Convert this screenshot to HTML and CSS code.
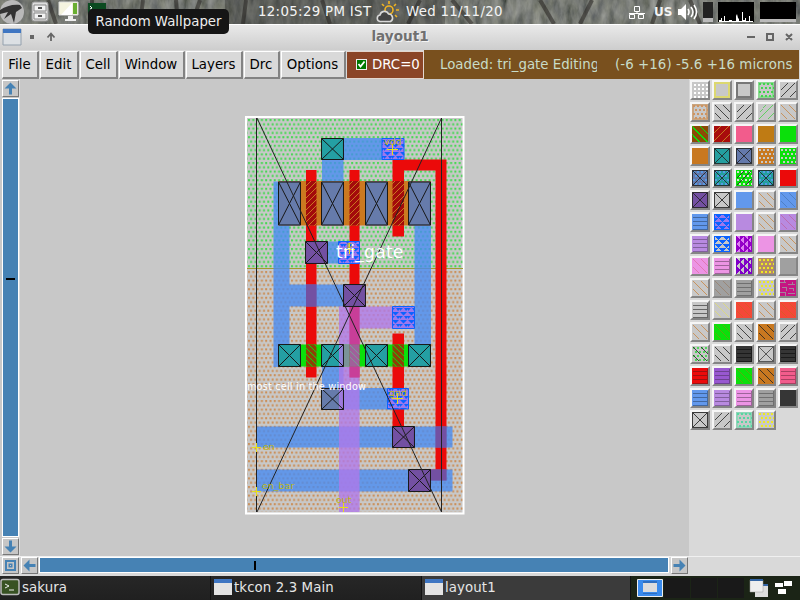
FILE: index.html
```html
<!DOCTYPE html>
<html lang="en">
<head>
<meta charset="utf-8">
<title>layout1</title>
<link rel="stylesheet" href="styles.css">
</head>
<body>
<header class="panel">
  <svg class="bark" width="800" height="24" aria-hidden="true">
    <filter id="noise" x="0" y="0" width="1" height="1"><feTurbulence type="fractalNoise" baseFrequency=".12 .05" numOctaves="4" seed="8"/><feColorMatrix values=".25 .2 0 0 -.04 .25 .2 0 0 -.03 .22 .18 .05 0 -.05 0 0 0 0 1"/></filter>
    <rect width="800" height="24" filter="url(#noise)"/>
    <path d="M48 0l8 24M92 0v24M143 0l-3 24M176 0l2 24M200 0l-8 24M246 0l-3 24M322 0l8 24M420 0l-12 24M452 0l20 24M540 0l14 24M592 0l-12 24M660 0l-8 24M690 0l10 24" stroke="#201c19" stroke-width="4" opacity=".5"/>
    <path d="M225 0h220v24H225z" fill="#222" opacity=".3"/>
  </svg>
  <svg class="tray-left" width="110" height="24">
    <circle cx="12" cy="12" r="12" fill="#b9b9b9"/><path d="M0 10C6 6 13 4 20 5L22 8 16 12 14 23 11 14 4 19 8 12 0 14Z" fill="#333"/>
    <rect x="32" y="2" width="16" height="19" rx="2" fill="#ddd" stroke="#999"/><path d="M34 5h12v6H34zM34 13h12v6H34z" fill="#f3f3f3" stroke="#888"/><path d="M38 8h4M38 16h4" stroke="#555" stroke-width="2"/>
    <path d="M59 2h19v13H59z" fill="#f5f4df" stroke="#ddd"/><path d="M73 3h4v11h-4z" fill="#69ae31"/><path d="M61 15L72 3v12z" fill="#fff"/><path d="M68 16h5v3h3v2H65v-2h3z" fill="#eee"/>
    <rect x="88" y="3" width="18" height="18" fill="#0b4a20"/><path d="M90 6l2 2-2 1" stroke="#fff" fill="none"/>
  </svg>
  <span class="clock">12:05:29 PM IST</span>
  <svg class="weather" width="26" height="24" fill="none">
    <circle cx="14" cy="10" r="4" stroke="#f0b323" stroke-width="1.6"/><path d="M14 1v3M7 4l2 2M21 4l-2 2M21 10h3M20 15l2 2" stroke="#f0b323" stroke-width="1.6"/>
    <path d="M5 21.500a3.300 3.300 0 010-6.500 4.500 4.500 0 018.500-1 4 4 0 012 7.500z" fill="#444" stroke="#d8d8d8" stroke-width="1.600"/>
  </svg>
  <span class="date">Wed 11/11/20</span>
  <svg class="net" width="16" height="14" fill="none" stroke="#fff"><path d="M5.500.5h5v5h-5zM.5 8.500h5v4h-5zM9.500 8.500h5v4h-5zM8 6v1M0 7.500h16"/></svg>
  <span class="lang">US</span>
  <svg class="vol" width="21" height="18" fill="none" stroke="#fff" stroke-width="1.600"><path d="M1 6h3l5-5v16l-5-5H1z" fill="#fff" stroke="none"/><path d="M11 6q2 3 0 6M14 4q4 5 0 10M17 2q5 7 0 14"/></svg>
  <svg class="graphs" width="94" height="20"><path d="M0 0h10v20H0z" fill="#222"/><path d="M0 16h10v4H0z" fill="#bbb"/><path d="M15 0h36v20H15zM57 0h36v20H57z" fill="#000"/><path d="M57 17h36v3H57z" fill="#bbb"/><path d="M16 20v-2h2v-2h1v3h2v-5h1v5h4v-1h3v1h4v-5l1-2 1 4 1 1v2h3v-9h1v8h2v-2h1v3h3v-5h1v5h3v1z" fill="#fff"/></svg>
</header>
<div class="tooltip">Random Wallpaper</div>

<div class="titlebar">
  <svg width="60" height="25"><path d="M3 4h18v16H3z" fill="#dce0e4" stroke="#93a0ad"/><path d="M3 4h18v4H3z" fill="#3f76c2"/><path d="M30 10h4v4h-4z" fill="#666"/><path d="M51 16V9M47.500 12.500l3.500-4 3.500 4" fill="none" stroke="#666" stroke-width="1.800"/></svg>
  <h1>layout1</h1>
  <svg class="winctl" width="60" height="25" fill="none" stroke="#666" stroke-width="2"><path d="M7 13h8M27 10h6v6h-6zM46 10l6 6M52 10l-6 6"/></svg>
</div>

<nav class="menubar">
  <button class="w-file">File</button><button class="w-edit">Edit</button><button class="w-cell">Cell</button><button class="w-window">Window</button><button class="w-layers">Layers</button><button class="w-drc">Drc</button><button class="w-options">Options</button>
  <span class="drc"><svg width="11" height="11"><path d="M0 0h11v11H0z" fill="#eee"/><path d="M1 1h9v9H1z" fill="#070"/><path d="M2.500 5l2 2.500 4-5" fill="none" stroke="#fff" stroke-width="1.800"/></svg>DRC=0</span>
  <span class="status"><span class="loaded">Loaded: tri_gate Editing</span><span class="coords">(-6 +16) -5.6 +16 microns</span></span>
</nav>

<main class="work">
  <div class="vscroll">
    <svg class="arrow" width="17" height="17"><path d="M7.500 1.500l6 6h-4.500v6h-3v-6H1.500z"/></svg>
    <div class="track"><i></i></div>
    <svg class="arrow" width="17" height="17"><path d="M7.500 13.500l6-6h-4.500v-6h-3v6H1.500z"/></svg>
  </div>
  <svg class="canvas" width="669" height="477" viewBox="20 79 669 477">
    <defs>
      <pattern id="well" width="8.600" height="8.600" x="247" y="118" patternUnits="userSpaceOnUse"><path d="M1 1h2v2H1zM5.300 1h2v2h-2zM3.100 5.300h2v2h-2zM7.400 5.300h1.200v2H7.400zM0 5.300h.8v2H0z" fill="#45d852"/></pattern>
      <pattern id="sub" width="8.600" height="8.600" x="247" y="270" patternUnits="userSpaceOnUse"><path d="M1 1h2v2H1zM5.300 1h2v2h-2zM3.100 5.300h2v2h-2zM7.400 5.300h1.200v2H7.400zM0 5.300h.8v2H0z" fill="#cb8f58"/></pattern>
      <pattern id="pg" width="6" height="6" patternUnits="userSpaceOnUse"><path d="M0 0h6v6H0z" fill="#a30b0b"/><path d="M-1 7L7-1M-1 1l2-2M5 7l2-2" stroke="#cb781f" stroke-width="1"/></pattern>
      <pattern id="ng" width="6" height="6" patternUnits="userSpaceOnUse"><path d="M0 0h6v6H0z" fill="#8a4405"/><path d="M-1-1l8 8M5-1l2 2M-1 5l2 2" stroke="#0ad80a" stroke-width="1"/></pattern>
      <pattern id="via" width="8" height="8" patternUnits="userSpaceOnUse"><path d="M0 0h8v8H0z" fill="#9b78ed"/><path d="M0 0h7L3.500 3.500zM4 4h4v1L6 7zM0 4h3L0 7z" fill="#0b62ff"/></pattern>
      <symbol id="cut" viewBox="0 0 22 22" preserveAspectRatio="none"><path d="M.5.5h21v21H.5zM.5.5l21 21M21.500.5l-21 21" fill="none" stroke="#181818" vector-effect="non-scaling-stroke"/></symbol>
    </defs>
    <rect x="246" y="117" width="217.500" height="396.500" fill="#c8c8c8" stroke="#fff" stroke-width="2"/>
    <path d="M247.500 118h215v150h-215z" fill="url(#well)"/>
    <path d="M247.500 269h215v243h-215z" fill="url(#sub)"/>
    <path d="M247 268.500h216" stroke="#a39b2e"/>
    <g fill="#eb0a0a">
      <path d="M306 170h10.500v207.500H306zM349.500 170h10v207.500h-10zM392.500 159.500h54v321h-16v-11h5V170.500h-31.500v66h-11.500zM392.500 333.500H404V432h-11.500z"/>
    </g>
    <path fill="#cb7920" d="M278 181h153v44.500H278z"/>
    <path fill="#0be00b" d="M278 344.500h153v22H278z"/>
    <path fill="url(#pg)" d="M306 181h10.500v44.500H306zM349.500 181h10v44.500h-10zM392.500 181H404v44.500h-11.500z"/>
    <path fill="url(#ng)" d="M306 344.500h10.500v22H306zM349.500 344.500h10v22h-10zM392.500 344.500H404v22h-11.500z"/>
    <path fill="#468af2" fill-opacity=".78" d="M322 138h60v22h-38.500v21H322zM273.500 181.500H278v44h11.500v59H344v22h-54.500v38.500H278v22h-4.500zM414.500 225.500H431v119h-16.500zM328 241.500h10v22h-10zM322 366.500h21.500V388H388v21.500h-66zM256.500 426.500h196v21h-196zM256.500 469.500h196v22h-196z"/>
    <g fill="#7350a2"><path d="M306 284.500h10.500v22H306zM435.500 426.500h11v21h-11zM430.500 469.500h16v11h-16z"/></g>
    <g fill="#667bab"><path d="M278.500 181.500h22v44h-22zM322 181.500h22v44h-22zM365.500 181.500h22v44h-22zM408.500 181.500h22v44h-22zM322 388h22v21.500h-22z"/></g>
    <g fill="#249fa3"><path d="M322 138h22v22h-22zM278.500 344.500h22v22h-22zM322 344.500h22v22h-22zM365.500 344.500h22v22h-22zM408.500 344.500h22v22h-22z"/></g>
    <path fill="#b078ea" fill-opacity=".78" d="M339 306.500h53v22h-32.500V344.500H339zM339 344.500h5v22h-5zM339 366.500h20.500V512H339z"/>
    <path fill="#c83e98" d="M349.500 306.500h10v38h-10zM349.500 366.500h10v11h-10z"/>
    <path fill="#7b9398" d="M344 344.500h5.500v22H344z"/>
    <path fill="#a0609a" d="M349.500 344.500h10v22h-10z"/><path d="M350 345l9.500 9.500M350 351l9.500 9.500M350 357l9.500 9.500" stroke="#7b9a98"/>
    <g fill="#7350a2"><path d="M305.500 241.500h22v22h-22zM343.500 284.500h22v22h-22zM392.500 426.500h22v21h-22zM408.500 469.500h22v22h-22z"/></g>
    <g fill="url(#via)" stroke="#0b62ff"><path d="M382 138.500h22v21h-22zM338.500 241.500h21v22h-21zM392.500 306.500h22v22h-22zM387.500 388.500h21v20.500h-21z"/></g>
    <use href="#cut" x="278" y="181" width="23" height="45"/><use href="#cut" x="321" y="181" width="23" height="45"/><use href="#cut" x="365" y="181" width="23" height="45"/><use href="#cut" x="408" y="181" width="23" height="45"/>
    <use href="#cut" x="321" y="138" width="23" height="22"/><use href="#cut" x="305" y="241" width="23" height="23"/><use href="#cut" x="343" y="284" width="23" height="23"/>
    <use href="#cut" x="278" y="344" width="23" height="23"/><use href="#cut" x="321" y="344" width="23" height="23"/><use href="#cut" x="365" y="344" width="23" height="23"/><use href="#cut" x="408" y="344" width="23" height="23"/>
    <use href="#cut" x="321" y="388" width="23" height="22"/><use href="#cut" x="392" y="426" width="23" height="22"/><use href="#cut" x="408" y="469" width="23" height="23"/>
    <path d="M256.500 118v394M441.500 118v394M257 118l184.500 394M441.500 118L257 512" fill="none" stroke="#222"/>
    <path d="M392.500 144v11M387 149.500h11M349.500 243v11M344 249.500h11M397.500 393v11M392 398.500h11M256.500 443v9M252 447.500h9M256.500 487v9M252 491.500h9M343.500 503v9M339 507.500h9" stroke="#e6df18"/>
    <g class="pin"><text x="384" y="145">vdd</text><text x="347" y="248">p</text><text x="389" y="396">gnd</text><text x="263" y="450">en</text><text x="262" y="489">en_bar</text><text x="336" y="503">out</text></g>
    <text class="cellname" x="336" y="257.500" textLength="67.500">tri_gate</text>
    <text class="note" x="247" y="390" textLength="119">most cell in the window</text>
  </svg>
  <aside class="palette" id="palette"></aside>
</main>

<div class="hscroll">
  <svg class="arrow" width="17" height="17"><path d="M2 2h11v11H2zM4 4v7h7V4z" fill-rule="evenodd"/><path d="M5.500 5.500h4v4h-4z"/><path d="M7 7h1v1H7z" fill="#c8c8c8"/></svg>
  <svg class="arrow" width="17" height="17"><path d="M1.500 7.500l6-6v4.500h6v3h-6v4.500z"/></svg>
  <div class="track"><i></i></div>
  <svg class="arrow" width="17" height="17"><path d="M13.500 7.500l-6-6v4.500h-6v3h6v4.500z"/></svg>
</div>

<footer class="taskbar">
  <div class="task"><svg width="20" height="18"><rect x="1" y="1.500" width="18" height="15" rx="2" fill="#385223" stroke="#bbb" stroke-width="1.500"/><path d="M5 6l4 2-4 2M9 12h5" fill="none" stroke="#eee"/></svg>sakura</div>
  <div class="task"><svg width="20" height="18"><path d="M2 1h18v16H2z" fill="#e3e3e3"/><path d="M2 1h18v4H2z" fill="#3f76c2"/></svg>tkcon 2.3 Main</div>
  <div class="task active"><svg width="20" height="18"><path d="M2 1h18v16H2z" fill="#e3e3e3"/><path d="M2 1h18v4H2z" fill="#3f76c2"/></svg>layout1</div>
  <svg class="pager" width="169" height="24"><path d="M0 0h169v24H0z" fill="#1b2416"/><path d="M6.500 3.500h25v17h-25z" fill="#3a8bec" stroke="#eee"/><path d="M12 7h14v9H12z" fill="#ddd"/><path d="M12 5h14v2H12zM12 17h14v1H12z" fill="#2f6fc0"/><path d="M33 2h26v20H33zM60 2h26v20H60zM87 2h26v20h-26z" fill="#191919"/><path d="M124 8h13v13h-13z" fill="#ddd"/><path d="M124 8h13v2h-13z" fill="#3465a4"/><path d="M119 4h13v12h-13z" fill="#eee" stroke="#999" stroke-width=".5"/><path d="M119 3h13v2h-13z" fill="#3465a4"/><path d="M144 7h8v4h-8zM153 5h8v5h-8zM147 13h8v5h-8z" fill="#fff"/></svg>
</footer>
<script src="palette.js"></script>
</body>
</html>
```
FILE: styles.css
```css
* { box-sizing: border-box; }
body { margin: 0; width: 800px; height: 600px; overflow: hidden; background: #d9d9d9; font: 13.33px "DejaVu Sans", sans-serif; display: flex; flex-direction: column; color: #000; }
svg { display: block; flex: none; }
.panel { position: relative; display: flex; align-items: center; height: 24px; flex: none; color: #f4f4f4; background: #3b3a35; overflow: hidden; }
.panel > * { position: relative; flex: none; white-space: nowrap; }
.panel .bark { position: absolute; left: 0; top: 0; }
.panel span { padding-bottom: 1px; }
.clock { width: 117px; margin-left: 148px; letter-spacing: .33px; }
.weather { margin-right: 5px; }
.date { width: 223px; letter-spacing: .3px; }
.net { margin-right: 9px; margin-top: 2px; }
.lang { width: 23px; font-weight: bold; font-size: 12px; }
.vol { margin-right: 5px; }
.tooltip { position: absolute; z-index: 2; left: 88px; top: 9px; width: 141px; height: 25px; line-height: 25px; border-radius: 5px; background: #151515; color: #eee; text-align: center; white-space: nowrap; }
.titlebar { display: flex; height: 26px; flex: none; border-top: 1px solid #fff; background: linear-gradient(#e9e9e9, #cdcdcd); }
.titlebar h1 { flex: 1; margin: 0; font-size: 13.6px; line-height: 23px; color: #707070; text-align: center; text-shadow: 1px 1px #f4f4f4; }
.titlebar .winctl { margin-top: -1px; }
.menubar { display: flex; gap: 1px; height: 29px; flex: none; padding: 1px 0 0 2px; background: #d9d9d9; }
.menubar button { flex: none; height: 28px; padding: 0 1px 0 0; border: solid; border-width: 1px 2px 2px 1px; border-color: #fff #828282 #828282 #fff; background: #d9d9d9; font: inherit; color: #000; }
.w-file { width: 37px; } .w-edit { width: 39px; } .w-cell { width: 38px; } .w-window { width: 66px; } .w-layers { width: 57px; } .w-drc { width: 36px; } .w-options { width: 65px; }
.drc { display: flex; align-items: center; gap: 5px; width: 77px; height: 28px; padding: 0 0 1px 9px; background: #8b4527; border: 1px solid #e3d7cf; border-left-width: 0; color: #fff; }
.status { display: flex; align-items: center; flex: 1; height: 29px; margin: -1px 1px 0 -1px; padding: 0 0 1px 16px; background: #79501e; color: #c8dcc8; white-space: nowrap; }
.loaded { width: 157px; overflow: hidden; margin-right: 18px; }
.coords { letter-spacing: .08px; }
.work { display: flex; height: 477px; flex: none; background: #c8c8c8; }
.vscroll { width: 20px; padding: 1px 0 0 2px; flex: none; display: flex; flex-direction: column; gap: 1px; border-right: 1px solid #ddd; }
.arrow { border: 1px solid; border-color: #fff #777 #777 #fff; background: #c6c6c6; fill: #4682b4; overflow: hidden; }
.track { background: #4682b4; border: 1px solid; border-color: #777 #fff #fff #777; outline: 1px solid #fff; outline-offset: -1px; }
.vscroll .track { width: 17px; height: 439px; padding: 179px 3px 0; }
.track i { display: block; background: #000; }
.vscroll .track i { height: 2px; }
.canvas { background: #c8c8c8; }
.canvas text { font-family: "DejaVu Sans", sans-serif; }
.pin { font-size: 9.5px; fill: #bdb612; }
.cellname { font-size: 17.3px; fill: #fff; }
.note { font-size: 9.7px; fill: #fff; }
.palette { display: grid; grid-template-columns: repeat(5, 20px); grid-auto-rows: 20px; gap: 2px; align-content: start; width: 111px; padding: 1px 0 0 1px; background: #d9d9d9; height: 477px; }
.swatch { width: 20px; height: 20px; border: solid; border-width: 2px; border-color: #f6f6f6 #858585 #858585 #f6f6f6; shape-rendering: crispEdges; }
.hscroll { display: flex; gap: 2px; height: 20px; flex: none; padding: 0 0 0 2px; border-top: 1px solid #f0f0f0; }
.hscroll .track { width: 630px; height: 16px; padding: 3px 0 0 214px; margin-left: -1px; }
.hscroll .track i { width: 2px; height: 9px; }
.taskbar { display: flex; height: 24px; flex: none; background: #222; color: #e6e6e6; }
.task { display: flex; align-items: center; gap: 2px; width: 211px; flex: none; padding-bottom: 2px; border-right: 1px solid #111; background: linear-gradient(#272727, #202020); letter-spacing: .1px; }
.task:not(:first-child) { padding-left: 1px; }
.task.active { width: 209px; background: #3b3b3b; }
```
FILE: palette.js
```js
// Each swatch: [background, pattern, pattern colour, optional second pattern, its colour]
const G = '#c8c8c8', K = '#222', B = '#c88642', OR = '#c87820', GR = '#0be00b', BL = '#6298ec',
  PU = '#b88ae0', PK = '#ec94e4', T = '#249fa0', S = '#6479ab', V = '#7350a2', Y = '#eeea20', R = '#eb0a0a', GY = '#a0a0a0';
const layers = [
  [G,'grid','#fff'],[G,'edge','#dcd870'],[G,'edge','#777'],[G,'edge','#8bd891','dots','#42d44d'],[G,'/',K],
  [G,'edge','#c9a580','dots','#cf9460'],[G,'\\',K],[G,'/',K],[G,'/','#48cf48'],[G,'\\',B],
  ['#8b4a05','\\\\',GR],['#a80c0c','//',OR],['#f25c8c'],['#bf7b14'],[GR],
  [OR],[T,'x',K],[S,'x',K],[OR,'dots',G],[GR,'dots',G],
  [S,'dots','#5599e5','x',K],[T,'dots','#5599e5','x',K],[GR,'dots','#d8dfd8','/',K],[T,'dots','#5599e5','x',K],[R],
  [V,'x',K],[G,'x',K],[BL],[G,'\\',B],[BL,'\\','#4a7bbd'],
  [BL,'-','#4268a0'],['#9b78ed','tri','#0b62ff'],[PU],[G,'\\',B],[PU,'\\','#bd65a5'],
  [PU,'-','#81609d'],[G,'tri','#0b62ff'],['#dc80f0','vtri','#9400c8'],[PK],[G,'\\',B],
  [PK,'\\','#e070a8'],[PK,'-','#9d6499'],[G,'vtri','#8000c8'],['#b58a68','dots',Y],[GY],
  [G,'\\',B],[GY,'\\','#98816d'],[GY,'-','#707070'],[G,'dots',Y],['#c51682','weave','#a5839b'],
  [G,'-','#666'],[G,'\\','#e0dc70'],['#f44838','\\','#d75c24'],[G,'\\',B],['#f44838','\\','#d75c24'],
  [G,'\\',B],[GR,'\\','#6d9f10'],[G,'\\',K],[OR,'\\',K],[G,'/',K],
  [G,'dots','#50d65b','\\',K],[G,'\\',K],['#353535','-','#1b1b1b'],[G,'x','#444'],['#353535','-','#1b1b1b'],
  [R,'-','#9e1010'],['#9858d0','-','#6d4291'],[GR,'\\','#6d9f10'],[OR,'\\',K],['#f25c8c','-','#a94062'],
  [BL,'-','#4268a0'],[PU,'-','#81609d'],[PK,'-','#9d6499'],[GY,'-','#707070'],['#363636'],
  [G,'x',K],[G,'/',K],[G,'edge','#91d4b8','dots','#55d7a1'],[G,'dots',Y]
];
const stroke = (d, c, w) => `<path d="${d}" fill="none" stroke="${c}" stroke-width="${w}"/>`;
function draw(kind, c) {
  let d = '';
  switch (kind) {
    case 'grid':
      for (let y = 2; y < 16; y += 4) for (let x = 2; x < 16; x += 4) d += `M${x} ${y}h2v2h-2z`;
      return `<path d="${d}" fill="${c}"/>`;
    case 'dots':
      for (let y = 0; y < 4; y++) for (let x = y % 2 ? 3 : 1; x < 16; x += 4) d += `M${x} ${y * 4 + 1}h2v2h-2z`;
      return `<path d="${d}" fill="${c}"/>`;
    case 'edge': return stroke('M1 1h14v14H1z', c, 2);
    case 'x': return `<g opacity=".85">${stroke('M.5.5h15v15H.5zM1 1l14 14M15 1L1 15', c, 1)}</g>`;
    case '/': return stroke('M1 7.500l6.500-6.500M1 15L15 1M8.500 15l6.500-6.500', c, .8);
    case '\\': return stroke('M1 8.500l6.500 6.500M1 1l14 14M8.500 1l6.500 6.500', c, .8);
    case '//': return stroke('M0 7l7-7M0 15L15 0M8 16l8-8', c, 1.4);
    case '\\\\': return stroke('M0 8l8 8M0 0l16 16M8 0l8 8', c, 1.4);
    case '-': return stroke('M1 3.500h15M1 7.500h15M1 11.500h15M1 15.500h15M15.500 1v15', c, 1);
    case 'tri':
      for (let y = 0; y < 16; y += 4) for (let x = y % 8 ? -4 : 0; x < 16; x += 8) d += `M${x} ${y}h8l-4 4z`;
      return `<path d="${d}" fill="${c}"/>` + stroke('M0 .5h16M.5 0v16M15.500 0v16M0 15.500h16', c, 1);
    case 'vtri':
      for (let x = 0; x < 16; x += 4) for (let y = x % 8 ? -4 : 0; y < 16; y += 8) d += `M${x} ${y}v8l4-4z`;
      return `<path d="${d}" fill="${c}"/>` + stroke('M.5 0v16M15.500 0v16', c, 1);
    case 'weave': return stroke('M0 2.500h6M8 4.500h7M2 7.500h4v3M9 8h4v3M0 12.500h5v3M8 13.500h7M4 0v3M12 2v3', c, 1);
  }
  return '';
}
document.getElementById('palette').innerHTML = layers.map(([bg, a, ca, b, cb]) =>
  `<svg class="swatch" viewBox="0 0 16 16"><rect width="16" height="16" fill="${bg}"/>${draw(a, ca)}${draw(b, cb)}</svg>`).join('');
```
